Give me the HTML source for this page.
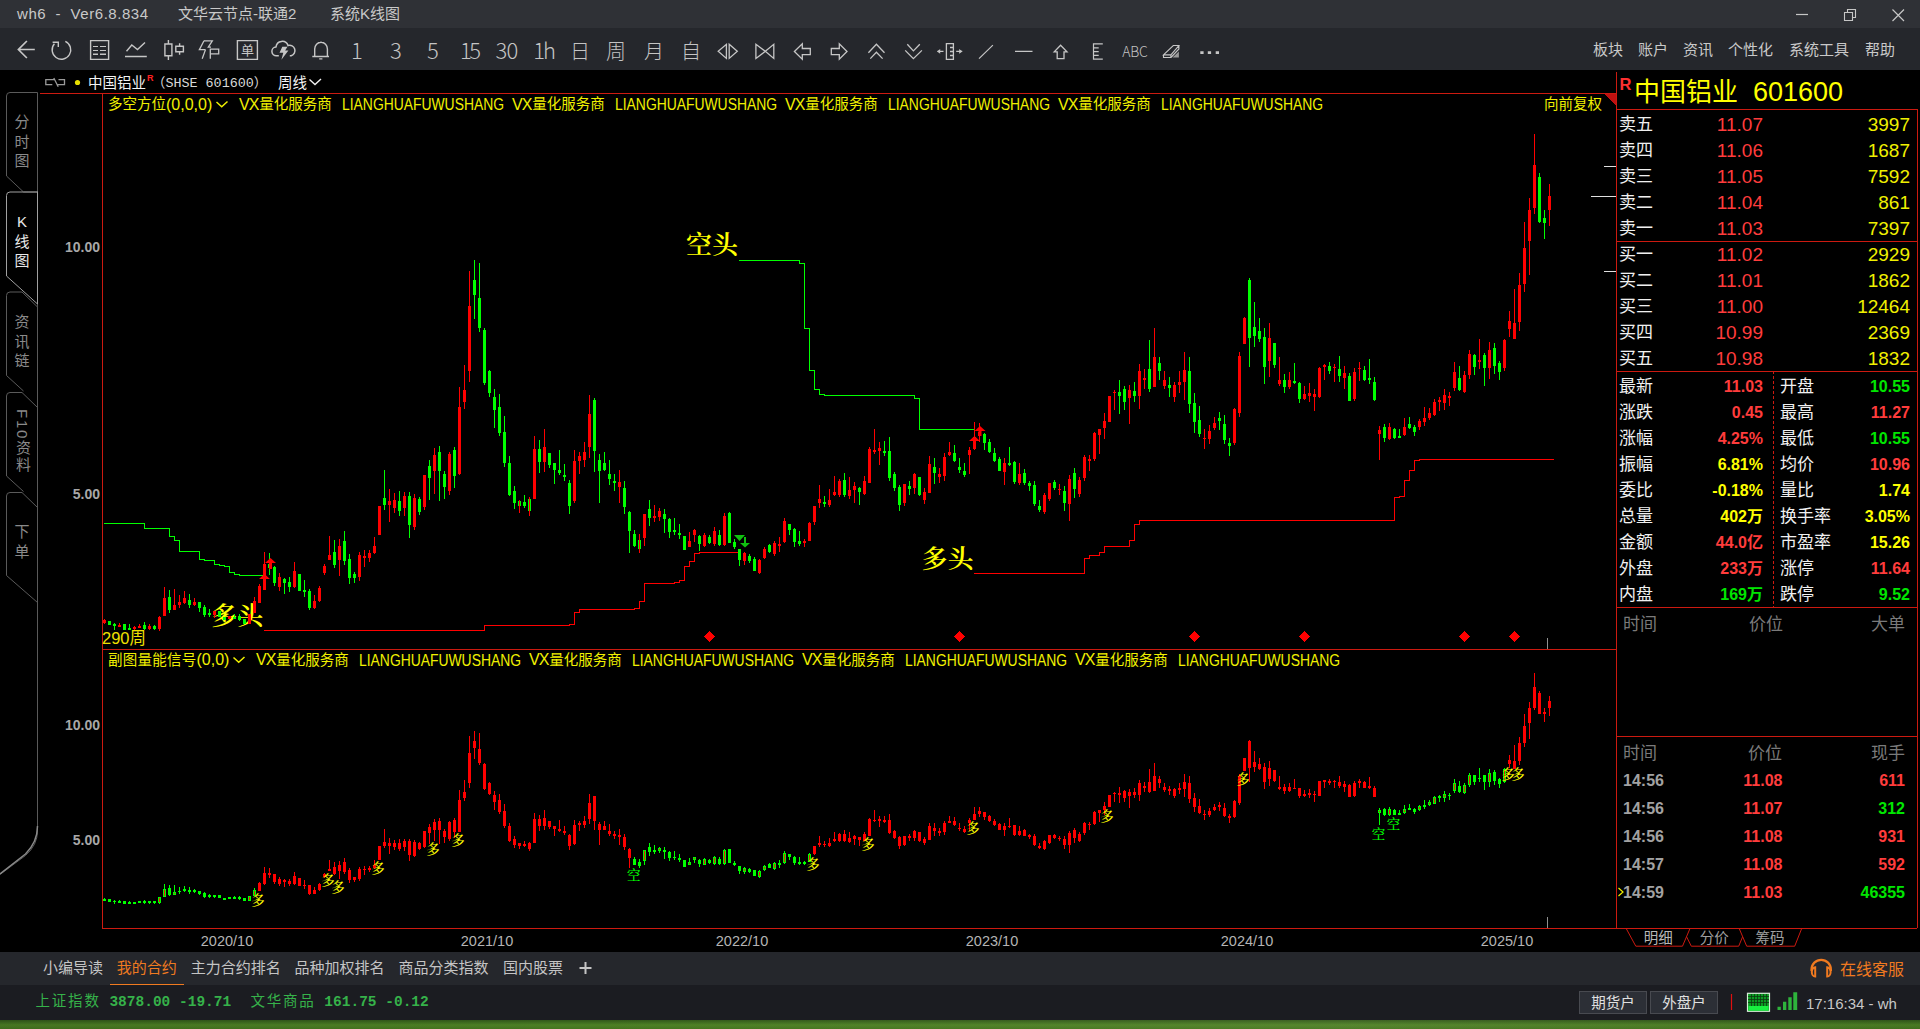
<!DOCTYPE html>
<html lang="zh-CN"><head><meta charset="utf-8"><title>wh6 - 系统K线图</title>
<style>
*{margin:0;padding:0;box-sizing:border-box}
html,body{width:1920px;height:1029px;overflow:hidden;background:#000}
body{position:relative;font-family:"Liberation Sans","Noto Sans CJK SC",sans-serif;color:#ccc}
.abs,.t{position:absolute;white-space:nowrap}
.t{line-height:1;transform:translateY(-50%)}
.r{text-align:right;transform:translate(-100%,-50%)}
.c{text-align:center;transform:translate(-50%,-50%)}
#titlebar{left:0;top:0;width:1920px;height:28px;background:#2f3136}
#toolbar{left:0;top:28px;width:1920px;height:42px;background:#25272c}
#tabbar{left:0;top:952px;width:1920px;height:33px;background:#25272c}
#status{left:0;top:985px;width:1920px;height:35px;background:#1b1c21}
#grass{left:0;top:1020px;width:1920px;height:9px;background:linear-gradient(90deg,rgba(0,0,0,0.08),rgba(0,0,0,0) 30%,rgba(255,255,200,0.06) 70%,rgba(0,0,0,0.05)),linear-gradient(#31581a,#4c8024 55%,#44741f)}
.tt{font-size:15px;color:#c9c9c9}
.menu{font-size:15px;color:#c9c9c9}
.y{color:#ffff00}
.red{color:#ff3c3c}
.grn{color:#00e600}
.lab{font-size:17px;color:#f0f0f0}
.num{font-size:19px}
.b{font-weight:bold;font-size:16px}
.hd{font-size:17px;color:#7a7a7a}
.ax{font-size:14px;font-weight:bold;color:#a8a8a8}
.date{font-size:14.5px;color:#b4b4b4}
.ind{font-size:14.5px;color:#f0f000}
.kai{font-family:"Noto Serif CJK SC",serif;font-weight:700;font-style:italic}
.side{font-size:15px;color:#8a8a8a;line-height:19.5px;width:20px;text-align:center;white-space:normal}
.lat{display:inline-block;font-size:16px;line-height:14.5px;transform:translateY(1px) scaleX(0.868);transform-origin:0 50%}
.lt2{font-size:16px;line-height:14.5px;position:relative;top:0.5px}
.tb{font-size:22px;color:#c4c4c4;font-family:"Noto Sans CJK SC",sans-serif;font-weight:300}
.tbc{font-size:20px;color:#c4c4c4;font-weight:300}
</style></head>
<body>
<div class="abs" id="titlebar"></div>
<div class="abs" id="toolbar"></div>
<div class="abs" id="tabbar"></div>
<div class="abs" id="status"></div>
<div class="abs" id="grass"></div>
<div class="abs" style="left:110px;top:984px;width:74px;height:1px;background:#f07a20"></div>
<div class="abs" style="left:1579px;top:991px;width:68px;height:23px;background:#2c2f36;border:1px solid #484a50"></div>
<div class="abs" style="left:1650px;top:991px;width:68px;height:23px;background:#2c2f36;border:1px solid #484a50"></div>
<svg id="chart" width="1920" height="1029" viewBox="0 0 1920 1029" style="position:absolute;left:0;top:0" shape-rendering="crispEdges">
<path d="M40 93.5H1616.5M102.5 93V928M102 649.5H1616.5M102 928.5H1917" stroke="#cc1a10" stroke-width="1" fill="none"/>
<path d="M1616.5 72V928" stroke="#cc1a10" stroke-width="1" fill="none"/>
<path d="M1604 94H1616V106z" fill="#c01010"/>
<path d="M104 523.5H144V528.5H169V536.5H174V540.5H179V551.5H199V559.5H204V560.5H214V564.5H219V565.5H224V566.5H229V572.5H234V574.5H239V575.5H264" fill="none" stroke="#00ff00" stroke-width="1"/>
<path d="M264 630.5H484V625.5H569V624.5H574V612.5H579V609.5H634V608.5H639V601.5H644V583.5H674V582.5H679V580.5H684V566.5H689V561.5H694V553.5H699V552.5H739" fill="none" stroke="#ff0000" stroke-width="1"/>
<path d="M739 260.5H799V263.5H804V328.5H809V370.5H814V389.5H819V394.5H824V395.5H914V398.5H919V429.5H974" fill="none" stroke="#00ff00" stroke-width="1"/>
<path d="M974 573.5H1084V558.5H1089V555.5H1099V552.5H1104V546.5H1129V540.5H1134V524.5H1139V520.5H1394V497.5H1399V496.5H1404V480.5H1409V470.5H1414V460.5H1419V459.5H1554" fill="none" stroke="#ff0000" stroke-width="1"/>
<g font-family="Noto Serif CJK SC, serif" font-weight="600" font-size="26" fill="#ffff00" text-anchor="middle" shape-rendering="auto" text-rendering="geometricPrecision"><text x="712" y="254">空头</text><text x="237.300" y="624.500">多头</text><text x="947.500" y="568">多头</text></g>
<path fill="#ff0000" d="M103 620h3v3h-3zM104 619h1v5h-1zM118 625h3v2h-3zM119 623h1v4h-1zM133 627h3v2h-3zM134 626h1v4h-1zM138 626h3v2h-3zM139 624h1v4h-1zM148 626h3v3h-3zM149 624h1v6h-1zM158 617h3v12h-3zM159 616h1v15h-1zM163 598h3v18h-3zM164 587h1v29h-1zM173 605h3v5h-3zM174 589h1v21h-1zM178 602h3v3h-3zM179 595h1v13h-1zM183 598h3v5h-3zM184 591h1v13h-1zM193 602h3v3h-3zM194 598h1v8h-1zM213 611h3v4h-3zM214 611h1v7h-1zM228 616h3v3h-3zM229 616h1v3h-1zM248 614h3v10h-3zM249 614h1v10h-1zM253 601h3v12h-3zM254 597h1v16h-1zM258 586h3v17h-3zM259 584h1v19h-1zM263 564h3v24h-3zM264 552h1v37h-1zM278 577h3v10h-3zM279 573h1v18h-1zM293 571h3v16h-3zM294 562h1v26h-1zM313 601h3v7h-3zM314 595h1v14h-1zM318 588h3v13h-3zM319 586h1v16h-1zM323 566h3v7h-3zM324 564h1v11h-1zM328 555h3v5h-3zM329 536h1v24h-1zM338 546h3v14h-3zM339 539h1v37h-1zM358 555h3v22h-3zM359 552h1v29h-1zM363 556h3v2h-3zM364 550h1v17h-1zM368 553h3v5h-3zM369 550h1v12h-1zM373 546h3v7h-3zM374 537h1v17h-1zM378 506h3v29h-3zM379 506h1v29h-1zM388 501h3v4h-3zM389 489h1v33h-1zM393 500h3v8h-3zM394 493h1v20h-1zM403 496h3v12h-3zM404 492h1v24h-1zM413 498h3v29h-3zM414 494h1v36h-1zM423 475h3v32h-3zM424 475h1v35h-1zM433 455h3v16h-3zM434 448h1v46h-1zM448 454h3v37h-3zM449 452h1v43h-1zM458 407h3v67h-3zM459 387h1v88h-1zM463 390h3v12h-3zM464 365h1v44h-1zM468 306h3v65h-3zM469 271h1v111h-1zM533 449h3v50h-3zM534 436h1v63h-1zM543 447h3v15h-3zM544 429h1v43h-1zM573 461h3v40h-3zM574 450h1v53h-1zM578 456h3v5h-3zM579 452h1v22h-1zM583 452h3v8h-3zM584 442h1v25h-1zM588 414h3v33h-3zM589 395h1v63h-1zM618 482h3v5h-3zM619 470h1v33h-1zM643 514h3v24h-3zM644 514h1v32h-1zM653 516h3v2h-3zM654 505h1v17h-1zM658 511h3v6h-3zM659 508h1v13h-1zM688 541h3v6h-3zM689 532h1v15h-1zM693 530h3v5h-3zM694 529h1v13h-1zM703 535h3v11h-3zM704 533h1v14h-1zM713 531h3v13h-3zM714 527h1v19h-1zM723 516h3v29h-3zM724 513h1v33h-1zM743 553h3v8h-3zM744 552h1v13h-1zM758 560h3v13h-3zM759 559h1v15h-1zM763 549h3v9h-3zM764 547h1v12h-1zM773 543h3v11h-3zM774 541h1v15h-1zM778 544h3v2h-3zM779 537h1v15h-1zM783 521h3v21h-3zM784 518h1v25h-1zM803 541h3v2h-3zM804 539h1v8h-1zM808 523h3v18h-3zM809 522h1v19h-1zM813 506h3v16h-3zM814 506h1v19h-1zM818 499h3v4h-3zM819 485h1v23h-1zM828 500h3v5h-3zM829 489h1v18h-1zM833 492h3v3h-3zM834 476h1v20h-1zM838 481h3v14h-3zM839 479h1v18h-1zM848 490h3v6h-3zM849 477h1v22h-1zM853 486h3v4h-3zM854 482h1v21h-1zM863 481h3v13h-3zM864 476h1v19h-1zM868 449h3v34h-3zM869 447h1v36h-1zM873 450h3v2h-3zM874 429h1v25h-1zM878 448h3v3h-3zM879 442h1v23h-1zM903 484h3v19h-3zM904 484h1v22h-1zM913 474h3v14h-3zM914 473h1v21h-1zM923 492h3v8h-3zM924 488h1v16h-1zM928 464h3v29h-3zM929 456h1v37h-1zM938 474h3v3h-3zM939 468h1v15h-1zM943 457h3v19h-3zM944 453h1v28h-1zM948 452h3v3h-3zM949 442h1v14h-1zM968 450h3v5h-3zM969 447h1v27h-1zM973 437h3v12h-3zM974 422h1v28h-1zM978 432h3v4h-3zM979 423h1v19h-1zM1003 463h3v9h-3zM1004 458h1v27h-1zM1018 474h3v9h-3zM1019 463h1v22h-1zM1043 495h3v17h-3zM1044 493h1v21h-1zM1048 483h3v16h-3zM1049 483h1v18h-1zM1058 489h3v1h-3zM1059 484h1v11h-1zM1068 479h3v25h-3zM1069 475h1v46h-1zM1078 480h3v14h-3zM1079 477h1v20h-1zM1083 457h3v21h-3zM1084 455h1v26h-1zM1088 459h3v2h-3zM1089 455h1v16h-1zM1093 433h3v26h-3zM1094 432h1v29h-1zM1098 429h3v6h-3zM1099 429h1v25h-1zM1103 421h3v7h-3zM1104 413h1v26h-1zM1108 396h3v26h-3zM1109 396h1v26h-1zM1113 392h3v1h-3zM1114 390h1v20h-1zM1128 390h3v8h-3zM1129 385h1v39h-1zM1138 371h3v25h-3zM1139 364h1v45h-1zM1143 378h3v2h-3zM1144 369h1v20h-1zM1153 357h3v30h-3zM1154 328h1v59h-1zM1163 380h3v6h-3zM1164 371h1v18h-1zM1173 385h3v12h-3zM1174 382h1v20h-1zM1178 382h3v3h-3zM1179 371h1v22h-1zM1183 370h3v12h-3zM1184 352h1v48h-1zM1203 438h3v1h-3zM1204 429h1v20h-1zM1208 431h3v8h-3zM1209 425h1v19h-1zM1213 423h3v5h-3zM1214 417h1v13h-1zM1233 409h3v34h-3zM1234 408h1v37h-1zM1238 356h3v57h-3zM1239 352h1v65h-1zM1243 318h3v26h-3zM1244 317h1v27h-1zM1268 338h3v23h-3zM1269 323h1v54h-1zM1278 380h3v4h-3zM1279 357h1v29h-1zM1288 380h3v7h-3zM1289 372h1v17h-1zM1303 394h3v5h-3zM1304 386h1v14h-1zM1308 393h3v3h-3zM1309 383h1v19h-1zM1313 394h3v3h-3zM1314 389h1v22h-1zM1318 368h3v29h-3zM1319 367h1v31h-1zM1323 365h3v2h-3zM1324 364h1v16h-1zM1333 367h3v1h-3zM1334 364h1v18h-1zM1343 373h3v5h-3zM1344 366h1v23h-1zM1353 372h3v27h-3zM1354 368h1v33h-1zM1358 368h3v1h-3zM1359 362h1v19h-1zM1378 430h3v4h-3zM1379 426h1v34h-1zM1388 427h3v12h-3zM1389 423h1v17h-1zM1403 427h3v8h-3zM1404 418h1v18h-1zM1418 421h3v6h-3zM1419 419h1v11h-1zM1423 418h3v4h-3zM1424 407h1v19h-1zM1428 413h3v5h-3zM1429 408h1v12h-1zM1433 402h3v13h-3zM1434 399h1v17h-1zM1438 400h3v2h-3zM1439 397h1v14h-1zM1443 395h3v8h-3zM1444 389h1v21h-1zM1448 396h3v2h-3zM1449 392h1v14h-1zM1453 372h3v16h-3zM1454 362h1v29h-1zM1463 375h3v17h-3zM1464 371h1v22h-1zM1468 354h3v21h-3zM1469 350h1v29h-1zM1478 360h3v2h-3zM1479 339h1v30h-1zM1488 350h3v18h-3zM1489 342h1v37h-1zM1503 340h3v28h-3zM1504 339h1v32h-1zM1508 321h3v8h-3zM1509 311h1v26h-1zM1513 323h3v16h-3zM1514 289h1v50h-1zM1518 285h3v37h-3zM1519 273h1v58h-1zM1523 248h3v36h-3zM1524 222h1v70h-1zM1528 210h3v31h-3zM1529 198h1v77h-1zM1533 165h3v43h-3zM1534 134h1v80h-1zM1548 196h3v14h-3zM1549 184h1v42h-1z"/>
<path fill="#00ff00" d="M108 621h3v4h-3zM109 621h1v4h-1zM113 624h3v2h-3zM114 623h1v7h-1zM123 624h3v6h-3zM124 624h1v6h-1zM128 628h3v2h-3zM129 624h1v6h-1zM143 625h3v4h-3zM144 622h1v8h-1zM153 626h3v3h-3zM154 625h1v5h-1zM168 597h3v13h-3zM169 590h1v23h-1zM188 600h3v5h-3zM189 594h1v14h-1zM198 602h3v6h-3zM199 602h1v10h-1zM203 607h3v8h-3zM204 605h1v12h-1zM208 613h3v2h-3zM209 609h1v8h-1zM218 611h3v6h-3zM219 611h1v6h-1zM223 617h3v3h-3zM224 617h1v3h-1zM233 617h3v2h-3zM234 614h1v5h-1zM238 616h3v4h-3zM239 614h1v7h-1zM243 619h3v5h-3zM244 619h1v5h-1zM268 564h3v4h-3zM269 553h1v22h-1zM273 567h3v16h-3zM274 566h1v20h-1zM283 579h3v4h-3zM284 578h1v16h-1zM288 582h3v5h-3zM289 577h1v15h-1zM298 574h3v17h-3zM299 574h1v17h-1zM303 590h3v2h-3zM304 580h1v17h-1zM308 591h3v17h-3zM309 589h1v21h-1zM333 552h3v13h-3zM334 540h1v28h-1zM343 541h3v20h-3zM344 531h1v34h-1zM348 559h3v19h-3zM349 554h1v30h-1zM353 574h3v4h-3zM354 572h1v11h-1zM383 498h3v7h-3zM384 470h1v40h-1zM398 501h3v10h-3zM399 491h1v25h-1zM408 496h3v29h-3zM409 492h1v46h-1zM418 499h3v13h-3zM419 497h1v18h-1zM428 466h3v12h-3zM429 460h1v40h-1zM438 452h3v19h-3zM439 446h1v55h-1zM443 474h3v13h-3zM444 471h1v28h-1zM453 450h3v26h-3zM454 447h1v41h-1zM473 280h3v15h-3zM474 260h1v59h-1zM478 298h3v30h-3zM479 263h1v69h-1zM483 330h3v53h-3zM484 328h1v57h-1zM488 371h3v22h-3zM489 370h1v27h-1zM493 397h3v13h-3zM494 389h1v39h-1zM498 407h3v26h-3zM499 394h1v42h-1zM503 432h3v31h-3zM504 416h1v51h-1zM508 463h3v32h-3zM509 456h1v40h-1zM513 491h3v12h-3zM514 486h1v23h-1zM518 501h3v5h-3zM523 502h3v4h-3zM524 495h1v13h-1zM528 499h3v12h-3zM538 449h3v13h-3zM539 440h1v33h-1zM548 453h3v12h-3zM549 453h1v15h-1zM553 463h3v7h-3zM554 463h1v21h-1zM558 470h3v3h-3zM559 450h1v25h-1zM563 475h3v2h-3zM564 464h1v17h-1zM568 483h3v23h-3zM569 480h1v34h-1zM593 400h3v51h-3zM594 398h1v74h-1zM598 460h3v11h-3zM599 454h1v49h-1zM603 463h3v7h-3zM604 452h1v19h-1zM608 474h3v5h-3zM609 460h1v25h-1zM613 481h3v2h-3zM614 474h1v17h-1zM623 488h3v19h-3zM624 481h1v33h-1zM628 512h3v19h-3zM629 511h1v42h-1zM633 534h3v12h-3zM634 530h1v17h-1zM638 540h3v9h-3zM648 509h3v9h-3zM649 500h1v26h-1zM663 514h3v5h-3zM664 509h1v24h-1zM668 519h3v13h-3zM669 518h1v20h-1zM673 530h3v2h-3zM674 518h1v17h-1zM678 533h3v2h-3zM679 524h1v15h-1zM683 536h3v14h-3zM684 536h1v14h-1zM698 536h3v8h-3zM699 535h1v16h-1zM708 537h3v6h-3zM709 535h1v9h-1zM718 535h3v10h-3zM719 530h1v16h-1zM728 513h3v30h-3zM729 512h1v31h-1zM733 542h3v5h-3zM734 539h1v10h-1zM738 549h3v11h-3zM739 549h1v17h-1zM748 556h3v5h-3zM749 554h1v9h-1zM753 559h3v12h-3zM754 557h1v14h-1zM768 545h3v7h-3zM769 544h1v9h-1zM788 524h3v6h-3zM789 524h1v11h-1zM793 529h3v13h-3zM794 528h1v19h-1zM798 541h3v3h-3zM799 531h1v15h-1zM823 502h3v2h-3zM824 496h1v11h-1zM843 480h3v15h-3zM844 473h1v24h-1zM858 488h3v4h-3zM859 487h1v18h-1zM883 451h3v2h-3zM884 441h1v15h-1zM888 451h3v27h-3zM889 437h1v44h-1zM893 474h3v14h-3zM894 472h1v19h-1zM898 487h3v18h-3zM899 485h1v26h-1zM908 486h3v3h-3zM909 481h1v14h-1zM918 477h3v18h-3zM919 477h1v19h-1zM933 467h3v6h-3zM934 458h1v26h-1zM953 453h3v8h-3zM954 445h1v17h-1zM958 467h3v3h-3zM959 458h1v15h-1zM963 471h3v4h-3zM964 463h1v14h-1zM983 434h3v9h-3zM984 433h1v17h-1zM988 442h3v10h-3zM989 439h1v14h-1zM993 453h3v8h-3zM994 448h1v14h-1zM998 459h3v12h-3zM999 457h1v14h-1zM1008 463h3v2h-3zM1009 447h1v19h-1zM1013 462h3v20h-3zM1014 461h1v23h-1zM1023 473h3v10h-3zM1024 469h1v16h-1zM1028 483h3v3h-3zM1029 481h1v10h-1zM1033 485h3v19h-3zM1034 481h1v25h-1zM1038 506h3v4h-3zM1039 500h1v12h-1zM1053 482h3v6h-3zM1054 480h1v10h-1zM1063 491h3v12h-3zM1064 486h1v25h-1zM1073 473h3v16h-3zM1074 468h1v30h-1zM1118 392h3v4h-3zM1119 380h1v34h-1zM1123 389h3v13h-3zM1124 386h1v24h-1zM1133 391h3v5h-3zM1134 382h1v20h-1zM1148 369h3v20h-3zM1149 340h1v52h-1zM1158 363h3v8h-3zM1159 357h1v23h-1zM1168 385h3v3h-3zM1169 377h1v20h-1zM1188 371h3v33h-3zM1189 357h1v56h-1zM1193 403h3v19h-3zM1194 393h1v40h-1zM1198 420h3v14h-3zM1199 406h1v31h-1zM1218 418h3v3h-3zM1219 412h1v18h-1zM1223 424h3v16h-3zM1224 415h1v29h-1zM1228 443h3v3h-3zM1229 438h1v18h-1zM1248 280h3v58h-3zM1249 278h1v89h-1zM1253 327h3v9h-3zM1254 302h1v45h-1zM1258 331h3v8h-3zM1259 318h1v24h-1zM1263 337h3v30h-3zM1264 328h1v56h-1zM1273 343h3v22h-3zM1274 343h1v25h-1zM1283 380h3v7h-3zM1284 374h1v19h-1zM1293 381h3v2h-3zM1294 363h1v21h-1zM1298 383h3v16h-3zM1299 382h1v21h-1zM1328 366h3v5h-3zM1329 362h1v12h-1zM1338 369h3v7h-3zM1339 356h1v26h-1zM1348 376h3v25h-3zM1349 373h1v28h-1zM1363 370h3v10h-3zM1364 366h1v15h-1zM1368 378h3v2h-3zM1369 359h1v25h-1zM1373 382h3v18h-3zM1374 377h1v24h-1zM1383 427h3v11h-3zM1384 424h1v18h-1zM1393 429h3v9h-3zM1394 428h1v11h-1zM1398 436h3v2h-3zM1399 429h1v9h-1zM1408 424h3v4h-3zM1409 417h1v12h-1zM1413 427h3v5h-3zM1414 425h1v11h-1zM1458 378h3v12h-3zM1459 366h1v25h-1zM1473 355h3v12h-3zM1474 354h1v21h-1zM1483 355h3v13h-3zM1484 353h1v33h-1zM1493 348h3v18h-3zM1494 343h1v31h-1zM1498 363h3v9h-3zM1499 361h1v19h-1zM1538 177h3v45h-3zM1539 173h1v50h-1zM1543 218h3v5h-3zM1544 210h1v29h-1z"/>
<path fill="#ff0000" d="M519 500h1v13h-1zM529 497h1v19h-1zM639 534h1v19h-1z"/>
<path fill="#ff0000" d="M258 883h3v8h-3zM259 882h1v9h-1zM263 873h3v11h-3zM264 867h1v18h-1zM268 873h3v2h-3zM269 868h1v10h-1zM273 874h3v8h-3zM274 874h1v10h-1zM278 879h3v5h-3zM279 877h1v9h-1zM283 880h3v2h-3zM284 879h1v8h-1zM288 881h3v3h-3zM289 879h1v7h-1zM293 876h3v8h-3zM294 872h1v13h-1zM298 878h3v8h-3zM299 878h1v8h-1zM303 885h3v1h-3zM304 880h1v9h-1zM308 885h3v9h-3zM309 885h1v10h-1zM313 890h3v4h-3zM314 887h1v7h-1zM318 884h3v6h-3zM319 883h1v8h-1zM323 874h3v3h-3zM324 873h1v5h-1zM328 869h3v2h-3zM329 860h1v11h-1zM333 867h3v7h-3zM334 862h1v13h-1zM338 865h3v6h-3zM339 861h1v18h-1zM343 862h3v10h-3zM344 858h1v16h-1zM348 870h3v10h-3zM349 868h1v15h-1zM353 877h3v3h-3zM354 877h1v5h-1zM358 869h3v10h-3zM359 867h1v14h-1zM363 869h3v1h-3zM364 866h1v9h-1zM368 868h3v2h-3zM369 866h1v6h-1zM373 865h3v3h-3zM374 860h1v9h-1zM378 846h3v14h-3zM379 846h1v14h-1zM383 842h3v4h-3zM384 829h1v19h-1zM388 843h3v3h-3zM389 838h1v16h-1zM393 843h3v4h-3zM394 840h1v10h-1zM398 843h3v6h-3zM399 839h1v12h-1zM403 841h3v6h-3zM404 839h1v12h-1zM408 841h3v14h-3zM409 839h1v22h-1zM413 842h3v14h-3zM414 840h1v17h-1zM418 843h3v6h-3zM419 842h1v8h-1zM423 831h3v16h-3zM424 831h1v17h-1zM428 827h3v6h-3zM429 824h1v20h-1zM433 822h3v8h-3zM434 819h1v22h-1zM438 821h3v9h-3zM439 818h1v26h-1zM443 831h3v6h-3zM444 829h1v14h-1zM448 822h3v17h-3zM449 821h1v20h-1zM453 820h3v12h-3zM454 818h1v20h-1zM458 800h3v32h-3zM459 790h1v42h-1zM463 792h3v6h-3zM464 780h1v21h-1zM468 753h3v30h-3zM469 736h1v52h-1zM473 741h3v7h-3zM474 731h1v28h-1zM478 749h3v14h-3zM479 733h1v32h-1zM483 764h3v25h-3zM484 763h1v27h-1zM488 783h3v11h-3zM489 782h1v13h-1zM493 795h3v7h-3zM494 791h1v19h-1zM498 800h3v12h-3zM499 794h1v20h-1zM503 811h3v15h-3zM504 804h1v24h-1zM508 826h3v15h-3zM509 823h1v19h-1zM513 839h3v6h-3zM514 836h1v12h-1zM518 843h3v3h-3zM519 843h1v6h-1zM523 844h3v2h-3zM524 841h1v6h-1zM528 843h3v6h-3zM529 842h1v9h-1zM533 819h3v24h-3zM534 813h1v30h-1zM538 819h3v7h-3zM539 815h1v16h-1zM543 818h3v8h-3zM544 810h1v20h-1zM548 821h3v6h-3zM549 821h1v8h-1zM553 826h3v3h-3zM554 826h1v10h-1zM558 829h3v2h-3zM559 820h1v12h-1zM563 831h3v2h-3zM564 826h1v9h-1zM568 835h3v11h-3zM569 834h1v16h-1zM573 825h3v19h-3zM574 820h1v25h-1zM578 823h3v2h-3zM579 821h1v10h-1zM583 821h3v4h-3zM584 816h1v12h-1zM588 803h3v16h-3zM589 794h1v30h-1zM593 796h3v25h-3zM594 796h1v34h-1zM598 824h3v6h-3zM599 822h1v23h-1zM603 826h3v4h-3zM604 821h1v9h-1zM608 831h3v3h-3zM609 824h1v12h-1zM613 834h3v2h-3zM614 831h1v8h-1zM618 835h3v2h-3zM619 829h1v16h-1zM623 837h3v10h-3zM624 834h1v16h-1zM628 849h3v9h-3zM629 848h1v20h-1zM813 846h3v8h-3zM814 846h1v9h-1zM818 843h3v2h-3zM819 836h1v11h-1zM823 844h3v1h-3zM824 841h1v6h-1zM828 843h3v3h-3zM829 838h1v9h-1zM833 839h3v2h-3zM834 832h1v10h-1zM838 834h3v7h-3zM839 833h1v9h-1zM843 834h3v7h-3zM844 830h1v12h-1zM848 838h3v4h-3zM849 832h1v11h-1zM853 836h3v3h-3zM854 835h1v10h-1zM858 837h3v3h-3zM859 837h1v9h-1zM863 834h3v7h-3zM864 832h1v9h-1zM868 819h3v17h-3zM869 818h1v18h-1zM873 820h3v1h-3zM874 810h1v12h-1zM878 819h3v2h-3zM879 816h1v11h-1zM883 820h3v2h-3zM884 816h1v7h-1zM888 820h3v13h-3zM889 814h1v20h-1zM893 831h3v7h-3zM894 830h1v9h-1zM898 837h3v9h-3zM899 836h1v13h-1zM903 836h3v9h-3zM904 836h1v10h-1zM908 836h3v2h-3zM909 834h1v7h-1zM913 831h3v7h-3zM914 830h1v11h-1zM918 832h3v9h-3zM919 832h1v10h-1zM923 839h3v4h-3zM924 837h1v8h-1zM928 826h3v14h-3zM929 823h1v17h-1zM933 828h3v3h-3zM934 823h1v13h-1zM938 831h3v2h-3zM939 828h1v8h-1zM943 823h3v9h-3zM944 821h1v14h-1zM948 821h3v2h-3zM949 816h1v7h-1zM953 821h3v4h-3zM954 817h1v9h-1zM958 828h3v1h-3zM959 823h1v8h-1zM963 829h3v3h-3zM964 826h1v7h-1zM968 820h3v3h-3zM969 818h1v13h-1zM973 814h3v6h-3zM974 807h1v13h-1zM978 811h3v3h-3zM979 807h1v10h-1zM983 812h3v5h-3zM984 812h1v8h-1zM988 816h3v5h-3zM989 815h1v7h-1zM993 821h3v4h-3zM994 819h1v7h-1zM998 824h3v6h-3zM999 823h1v7h-1zM1003 826h3v4h-3zM1004 823h1v13h-1zM1008 826h3v1h-3zM1009 818h1v10h-1zM1013 825h3v10h-3zM1014 825h1v11h-1zM1018 831h3v4h-3zM1019 826h1v10h-1zM1023 830h3v6h-3zM1024 829h1v7h-1zM1028 835h3v2h-3zM1029 834h1v5h-1zM1033 836h3v9h-3zM1034 834h1v12h-1zM1038 846h3v2h-3zM1039 843h1v6h-1zM1043 841h3v8h-3zM1044 840h1v10h-1zM1048 835h3v8h-3zM1049 835h1v9h-1zM1053 835h3v3h-3zM1054 834h1v5h-1zM1058 838h3v1h-3zM1059 836h1v5h-1zM1063 839h3v6h-3zM1064 836h1v13h-1zM1068 833h3v12h-3zM1069 831h1v22h-1zM1073 830h3v8h-3zM1074 828h1v15h-1zM1078 834h3v7h-3zM1079 832h1v10h-1zM1083 823h3v10h-3zM1084 822h1v13h-1zM1088 824h3v1h-3zM1089 822h1v8h-1zM1093 812h3v12h-3zM1094 811h1v14h-1zM1098 810h3v3h-3zM1099 810h1v12h-1zM1103 806h3v4h-3zM1104 802h1v13h-1zM1108 795h3v12h-3zM1109 795h1v12h-1zM1113 793h3v1h-3zM1114 792h1v10h-1zM1118 793h3v2h-3zM1119 787h1v16h-1zM1123 791h3v7h-3zM1124 790h1v12h-1zM1128 792h3v4h-3zM1129 789h1v19h-1zM1133 792h3v3h-3zM1134 788h1v10h-1zM1138 783h3v12h-3zM1139 780h1v21h-1zM1143 786h3v2h-3zM1144 782h1v10h-1zM1148 782h3v10h-3zM1149 769h1v24h-1zM1153 776h3v15h-3zM1154 763h1v28h-1zM1158 779h3v4h-3zM1159 776h1v12h-1zM1163 787h3v3h-3zM1164 783h1v9h-1zM1168 789h3v2h-3zM1169 786h1v9h-1zM1173 789h3v7h-3zM1174 788h1v10h-1zM1178 788h3v2h-3zM1179 783h1v11h-1zM1183 782h3v7h-3zM1184 774h1v23h-1zM1188 783h3v16h-3zM1189 776h1v27h-1zM1193 798h3v9h-3zM1194 793h1v19h-1zM1198 806h3v7h-3zM1199 799h1v15h-1zM1203 814h3v1h-3zM1204 810h1v10h-1zM1208 811h3v4h-3zM1209 808h1v9h-1zM1213 807h3v3h-3zM1214 804h1v7h-1zM1218 805h3v2h-3zM1219 802h1v9h-1zM1223 808h3v8h-3zM1224 803h1v14h-1zM1228 816h3v2h-3zM1229 814h1v9h-1zM1233 801h3v16h-3zM1234 800h1v18h-1zM1238 776h3v27h-3zM1239 774h1v31h-1zM1243 758h3v13h-3zM1244 758h1v13h-1zM1248 741h3v27h-3zM1249 740h1v42h-1zM1253 762h3v5h-3zM1254 751h1v21h-1zM1258 764h3v5h-3zM1259 758h1v12h-1zM1263 767h3v15h-3zM1264 763h1v26h-1zM1268 768h3v11h-3zM1269 761h1v25h-1zM1273 770h3v11h-3zM1274 770h1v12h-1zM1278 787h3v2h-3zM1279 776h1v14h-1zM1283 787h3v4h-3zM1284 784h1v10h-1zM1288 787h3v4h-3zM1289 783h1v9h-1zM1293 788h3v1h-3zM1294 779h1v10h-1zM1298 788h3v8h-3zM1299 788h1v10h-1zM1303 794h3v2h-3zM1304 790h1v7h-1zM1308 793h3v2h-3zM1309 789h1v9h-1zM1313 794h3v1h-3zM1314 791h1v11h-1zM1318 781h3v15h-3zM1319 781h1v15h-1zM1323 780h3v2h-3zM1324 780h1v8h-1zM1328 781h3v2h-3zM1329 779h1v6h-1zM1333 781h3v1h-3zM1334 780h1v8h-1zM1338 782h3v4h-3zM1339 776h1v12h-1zM1343 784h3v3h-3zM1344 781h1v11h-1zM1348 785h3v12h-3zM1349 784h1v13h-1zM1353 783h3v13h-3zM1354 781h1v16h-1zM1358 781h3v2h-3zM1359 779h1v9h-1zM1363 782h3v6h-3zM1364 781h1v7h-1zM1368 786h3v2h-3zM1369 777h1v12h-1zM1373 788h3v9h-3zM1374 786h1v11h-1zM1508 760h3v4h-3zM1509 755h1v13h-1zM1513 761h3v8h-3zM1514 745h1v24h-1zM1518 743h3v18h-3zM1519 737h1v28h-1zM1523 726h3v17h-3zM1524 714h1v33h-1zM1528 708h3v15h-3zM1529 702h1v37h-1zM1533 687h3v21h-3zM1534 673h1v37h-1zM1538 693h3v21h-3zM1539 691h1v23h-1zM1543 712h3v2h-3zM1544 708h1v14h-1zM1548 701h3v7h-3zM1549 696h1v20h-1z"/>
<path fill="#00ff00" d="M103 899h3v2h-3zM104 898h1v3h-1zM108 899h3v3h-3zM109 899h1v3h-1zM113 901h3v1h-3zM114 900h1v4h-1zM118 901h3v2h-3zM119 900h1v3h-1zM123 901h3v3h-3zM124 901h1v3h-1zM128 902h3v2h-3zM129 901h1v3h-1zM133 902h3v2h-3zM134 902h1v2h-1zM138 901h3v2h-3zM139 901h1v2h-1zM143 901h3v2h-3zM144 900h1v4h-1zM148 901h3v2h-3zM149 901h1v3h-1zM153 901h3v2h-3zM154 901h1v3h-1zM158 897h3v6h-3zM159 897h1v7h-1zM163 889h3v8h-3zM164 884h1v13h-1zM168 888h3v7h-3zM169 885h1v11h-1zM173 892h3v3h-3zM174 885h1v10h-1zM178 891h3v1h-3zM179 887h1v7h-1zM183 889h3v2h-3zM184 886h1v6h-1zM188 890h3v2h-3zM189 887h1v7h-1zM193 890h3v2h-3zM194 889h1v4h-1zM198 891h3v3h-3zM199 891h1v4h-1zM203 893h3v4h-3zM204 892h1v6h-1zM208 895h3v2h-3zM209 894h1v4h-1zM213 895h3v2h-3zM214 895h1v3h-1zM218 895h3v3h-3zM219 895h1v3h-1zM223 898h3v2h-3zM224 898h1v2h-1zM228 897h3v2h-3zM229 897h1v2h-1zM233 897h3v2h-3zM234 896h1v3h-1zM238 897h3v2h-3zM239 896h1v4h-1zM243 898h3v3h-3zM244 898h1v3h-1zM248 896h3v5h-3zM249 896h1v5h-1zM253 890h3v6h-3zM254 888h1v8h-1zM633 859h3v6h-3zM634 857h1v8h-1zM638 862h3v4h-3zM639 859h1v9h-1zM643 850h3v11h-3zM644 850h1v15h-1zM648 847h3v5h-3zM649 843h1v13h-1zM653 850h3v2h-3zM654 845h1v9h-1zM658 848h3v3h-3zM659 847h1v6h-1zM663 850h3v2h-3zM664 847h1v12h-1zM668 852h3v6h-3zM669 851h1v10h-1zM673 857h3v1h-3zM674 851h1v9h-1zM678 858h3v2h-3zM679 854h1v8h-1zM683 860h3v7h-3zM684 860h1v7h-1zM688 862h3v3h-3zM689 858h1v7h-1zM693 857h3v3h-3zM694 857h1v6h-1zM698 860h3v4h-3zM699 859h1v8h-1zM703 859h3v6h-3zM704 858h1v7h-1zM708 860h3v3h-3zM709 859h1v5h-1zM713 857h3v7h-3zM714 856h1v9h-1zM718 859h3v5h-3zM719 857h1v8h-1zM723 850h3v14h-3zM724 849h1v16h-1zM728 849h3v14h-3zM729 849h1v14h-1zM733 863h3v2h-3zM734 861h1v5h-1zM738 866h3v5h-3zM739 866h1v8h-1zM743 868h3v4h-3zM744 867h1v7h-1zM748 869h3v3h-3zM749 868h1v5h-1zM753 870h3v6h-3zM754 870h1v6h-1zM758 871h3v6h-3zM759 870h1v8h-1zM763 866h3v4h-3zM764 865h1v6h-1zM768 864h3v4h-3zM769 863h1v5h-1zM773 863h3v6h-3zM774 862h1v8h-1zM778 863h3v2h-3zM779 860h1v8h-1zM783 853h3v10h-3zM784 851h1v13h-1zM788 854h3v3h-3zM789 854h1v6h-1zM793 857h3v6h-3zM794 856h1v9h-1zM798 862h3v2h-3zM799 857h1v8h-1zM803 862h3v2h-3zM804 861h1v4h-1zM808 854h3v8h-3zM809 853h1v9h-1zM1378 810h3v3h-3zM1379 808h1v17h-1zM1383 809h3v6h-3zM1384 808h1v8h-1zM1388 809h3v6h-3zM1389 807h1v9h-1zM1393 810h3v5h-3zM1394 809h1v6h-1zM1398 813h3v2h-3zM1399 810h1v5h-1zM1403 809h3v4h-3zM1404 805h1v9h-1zM1408 808h3v2h-3zM1409 804h1v6h-1zM1413 809h3v3h-3zM1414 808h1v6h-1zM1418 806h3v4h-3zM1419 805h1v6h-1zM1423 805h3v2h-3zM1424 800h1v9h-1zM1428 802h3v3h-3zM1429 800h1v6h-1zM1433 797h3v7h-3zM1434 796h1v8h-1zM1438 796h3v2h-3zM1439 795h1v7h-1zM1443 794h3v4h-3zM1444 791h1v11h-1zM1448 795h3v1h-3zM1449 793h1v7h-1zM1453 783h3v8h-3zM1454 779h1v14h-1zM1458 786h3v6h-3zM1459 781h1v12h-1zM1463 785h3v8h-3zM1464 783h1v11h-1zM1468 775h3v10h-3zM1469 773h1v14h-1zM1473 775h3v7h-3zM1474 775h1v10h-1zM1478 778h3v1h-3zM1479 768h1v14h-1zM1483 775h3v7h-3zM1484 775h1v15h-1zM1488 773h3v9h-3zM1489 769h1v18h-1zM1493 772h3v9h-3zM1494 770h1v15h-1zM1498 779h3v5h-3zM1499 778h1v10h-1zM1503 769h3v13h-3zM1504 768h1v15h-1z"/>
<path fill="#e02000" d="M159 898h1v4h-1zM164 890h1v6h-1zM174 893h1v1h-1zM249 897h1v3h-1zM254 891h1v4h-1zM644 851h1v9h-1zM659 849h1v1h-1zM689 863h1v1h-1zM694 858h1v1h-1zM704 860h1v4h-1zM714 858h1v5h-1zM724 851h1v12h-1zM744 869h1v2h-1zM759 872h1v4h-1zM764 867h1v2h-1zM774 864h1v4h-1zM784 854h1v8h-1zM809 855h1v6h-1zM1379 811h1v1h-1zM1389 810h1v4h-1zM1404 810h1v2h-1zM1419 807h1v2h-1zM1429 803h1v1h-1zM1434 798h1v5h-1zM1444 795h1v2h-1zM1454 784h1v6h-1zM1464 786h1v6h-1zM1469 776h1v8h-1zM1489 774h1v7h-1zM1504 770h1v11h-1z"/>
<path d="M709.5 631l5.5 5.5l-5.5 5.5l-5.5 -5.5z" fill="#ff0000"/><path d="M959.5 631l5.5 5.5l-5.5 5.5l-5.5 -5.5z" fill="#ff0000"/><path d="M1194.5 631l5.5 5.5l-5.5 5.5l-5.5 -5.5z" fill="#ff0000"/><path d="M1304.5 631l5.5 5.5l-5.5 5.5l-5.5 -5.5z" fill="#ff0000"/><path d="M1464.5 631l5.5 5.5l-5.5 5.5l-5.5 -5.5z" fill="#ff0000"/><path d="M1514.5 631l5.5 5.5l-5.5 5.5l-5.5 -5.5z" fill="#ff0000"/>
<path d="M1604 166.5H1616M1591 196.5H1616M1604 271.5H1616" stroke="#e0e0e0" stroke-width="1"/>
<path d="M1547.5 638V649M1547.5 917V928" stroke="#909090" stroke-width="1"/>
<g fill="#ff0000" shape-rendering="auto"><path d="M264.5 574l5.5 5h-4.0V590h-3.0V579h-4.0z"/><path d="M270.5 558l5.5 5h-4.0V569h-3.0V563h-4.0z"/><path d="M974.5 436l5.5 5h-4.0V449h-3.0V441h-4.0z"/><path d="M980 426l5.5 5h-4.0V436h-3.0V431h-4.0z"/></g>
<g fill="#10c010" shape-rendering="auto"><path d="M734 535h11l-5.5 6z"/><path d="M744 537h2v6h4l-5 4.5l-5 -4.5h4z"/></g>
</svg>
<svg id="ui" width="1920" height="1029" viewBox="0 0 1920 1029" style="position:absolute;left:0;top:0">
<g fill="none" stroke="#c6c6c6" stroke-width="1.4" stroke-linejoin="miter">
<!-- window controls -->
<path d="M1796 14.5H1808" stroke-width="1.2"/>
<path d="M1844.5 12.5h8v8h-8zM1847.5 12.5v-3h8v8h-3" stroke-width="1.1"/>
<path d="M1892.5 9.5l11.5 11.5M1904 9.5l-11.5 11.5" stroke-width="1.2"/>
<!-- back -->
<path d="M34.8 49.5H18.6M26.9 41l-8.5 8.5l8.5 8.5" stroke-width="1.7"/>
<!-- refresh -->
<path d="M65.300 41.400A9.300 9.300 0 1 1 54.400 43.800M52.600 42.200h5.700v4.800" stroke-width="1.400"/>
<!-- list -->
<path d="M90.6 40.6h18v18.8h-18z"/>
<path d="M93 46.5h5M100 46.5h6M93 50.5h5M100 50.5h6" stroke-width="1"/>
<path d="M93 54.2h5M100 54.2h6" stroke-width="1.6"/>
<!-- line chart -->
<path d="M126.5 51.2l5.3 -6.2l5.7 4.5l7.5 -7.1M125 56.5h21.8"/>
<!-- candles -->
<path d="M164.9 44h7v11.7h-7zM168.4 40v4M168.4 55.7v4.3M175.8 46.2h7.6v5.6h-7.6zM179.6 43.2v3M179.6 51.8v3"/>
<!-- lightning + flag -->
<path d="M204 40.8h8.3l-4 6.3h2.7M205.5 49.6l-3.3 9.2M204 40.8l-4.6 8.8h6.1" stroke-width="1.3"/>
<path d="M210.3 58.8v-9.6h8.4v4.6h-8.4" stroke-width="1.3"/>
<!-- dan box -->
<path d="M237.4 40.6h20v18.8h-20z"/>
<!-- cloud -->
<path d="M278.8 55.7h-2.2a4.4 4.4 0 0 1 -0.6 -8.8a6.2 6.2 0 0 1 12 -1.4a4.6 4.6 0 0 1 3.2 10.2h-1.4" stroke-width="1.5"/>
<path d="M282.3 46.7h5.2l-2.4 3.7h3.3l-7 9.4l1.9 -7.1h-3.8z" fill="#c6c6c6" stroke="none"/>
<!-- bell -->
<path d="M314.7 56.5v-7.6a6.35 6.6 0 0 1 12.7 0v7.6M312.3 56.5h16.7M319.2 58.9h3.2M321 41.5v0.8" stroke-width="1.4"/>
<!-- <| |> -->
<path d="M726.4 44.3v14.1l-8.2 -7.05zM729.2 44.3v14.1l8.1 -7.05z" stroke-width="1.3"/>
<!-- bowtie -->
<path d="M755.9 44.3v14.1l9.4 -7.05zM773.8 44.3v14.1l-8.5 -7.05z" stroke-width="1.3"/>
<!-- left arrow -->
<path d="M794.4 51.5l7.9 -7.6v4.6h8v6.1h-8v4.6z" stroke-width="1.3"/>
<!-- right arrow -->
<path d="M847 51.5l-7.7 -7.6v4.6h-8v6.1h8v4.6z" stroke-width="1.3"/>
<!-- double up -->
<path d="M868.4 52.7l8 -8.4l8.1 8.4M870.3 58.6l6.1 -6.3l6.2 6.3" stroke-width="1.3"/>
<!-- double down -->
<path d="M907.3 44.3l6.1 6.6l6.4 -6.6M905.2 50.4l8.2 8.2l8.5 -8.2" stroke-width="1.3"/>
<!-- ruler arrows -->
<path d="M946.4 43.6h7v15.8h-7zM950 47.5h3.4M950 51.5h3.4M950 55.5h3.4M937.5 51.4h6M956.2 51.4h6" stroke-width="1.3"/>
<path d="M937 51.4l3.2 -2.4v4.8zM962.4 51.4l-3.2 -2.4v4.8z" fill="#c6c6c6" stroke="none"/>
<!-- slash, dash -->
<path d="M979 58.6l13.9 -13.5M1015 51.4h17.5" stroke-width="1.2"/>
<!-- up arrow -->
<path d="M1060.6 45.2l6.4 6.7h-3v6.7h-6.8v-6.7h-3z" stroke-width="1.3"/>
<!-- E ruler -->
<path d="M1102.8 43.9h-9.3v15.2h9.3M1093.5 47.9h5.2M1093.5 51.6h5.2M1093.5 55.4h5.2" stroke-width="1.2"/>
<!-- eraser -->
<path d="M1163.5 54.9l9.8 -9.4h5.6l-8 9.4zM1163.5 54.9v2.6h7.4v-2.6M1170.9 57.5l8 -8.5v-3.5" stroke-width="1.1"/>
<path d="M1172.5 57.6l6.4 -6v6z" fill="#9a9a9a" stroke="none"/>
</g>
<path d="M1200.3 51.3h3.3v2.6h-3.3zM1207.8 51.3h3.3v2.6h-3.3zM1215.7 51.3h3.3v2.6h-3.3z" fill="#c6c6c6"/>
<!-- dropdown chevrons -->
<g fill="none" stroke="#f0f000" stroke-width="1.500">
<path d="M216.500 102l5.200 4.800l5.800 -5.300"/>
<path d="M233.500 657.500l5.200 4.800l5.800 -5.300"/>
</g>
<path d="M309.5 79.5l5.5 5l6 -5.5" fill="none" stroke="#f0f0f0" stroke-width="1.4"/>
<!-- link icon + dot -->
<path d="M54 79.700h-8.200v5h6.500M58.500 79.700h6v5h-8M53.800 78l4.400 8.800" fill="none" stroke="#9a9a9a" stroke-width="1.300"/>
<circle cx="77.5" cy="82.5" r="2.6" fill="#e8e000"/>
<!-- right panel lines -->
<g fill="none" stroke="#cc1a10" stroke-width="1" shape-rendering="crispEdges">
<path d="M1617 109.5H1917M1617 241.5H1917M1617 371.5H1917M1617 607.5H1917M1617 736.5H1917M1917.5 109V928"/>
<path d="M1773.5 371V607" stroke-dasharray="3 2"/>
</g>
<!-- bottom small tabs -->
<g fill="none" stroke="#cc1a10" stroke-width="1">
<path d="M1626.200 928.500l9.600 17.700h46.700l7.500 -17.700"/>
<path d="M1686.700 937l4.600 9.200h47.400l3.800 -9.200"/>
<path d="M1739.200 928.500l7.500 17.700h48l7 -17.700"/>
</g>
<!-- headphone -->
<g fill="none" stroke="#f07a20" stroke-width="2.200">
<path d="M1811.500 971v-1.500a9.700 9.700 0 0 1 19.400 0v1.500"/>
<path d="M1815.200 967.300a3.400 4.600 0 0 0 0 9.200zM1827.200 967.300a3.400 4.600 0 0 1 0 9.200z" stroke-width="2"/>
</g>
<!-- + tab -->
<path d="M579.5 968h12M585.5 962v12" stroke="#c4c4c4" stroke-width="2"/>
<!-- status icons -->
<path d="M1731.500 994v16" stroke="#e01010" stroke-width="1.200"/>
<rect x="1747.500" y="993.300" width="22" height="18" fill="#0a9a22" stroke="#d8ecd8" stroke-width="1.200"/>
<rect x="1748.500" y="1006" width="20" height="4.600" fill="#18f040"/>
<path d="M1748 996.500h21M1748 999.500h21M1748 1002.500h21M1751.500 994v12M1754.500 994v12M1757.500 994v12M1760.500 994v12M1763.500 994v12M1766.500 994v12" stroke="#0c3a10" stroke-width="0.800"/>
<path d="M1777.500 1006.700h3.300v3.300h-3.300zM1783 1001.700h3.300v8.300h-3.300zM1788.300 997.200h3.400v12.800h-3.400zM1793.300 992.200h3.900v17.800h-3.900z" fill="#2eb43c"/>
<!-- yellow > marker -->
<path d="M1618.500 888l4.500 4l-4.500 4" fill="none" stroke="#f0f000" stroke-width="1.2"/>
<!-- sidebar tabs -->
<g fill="none" stroke="#5a5a5a" stroke-width="1">
<path d="M6.500 176v-80a3.500 3.500 0 0 1 3.500 -3.500h27.500V831q0 14 -12 24.500l-25.500 19M37.500 192h-14l-17 -16"/>
<path d="M23.500 391l-17 -15.500v-80a3.500 3.500 0 0 1 3.500 -3.500h12l15.500 15"/>
<path d="M23.500 491.500l-17 -15.500v-80a3.500 3.500 0 0 1 3.500 -3.500h12l15.500 15"/>
<path d="M37.500 602.500l-31 -27v-79.500a3.500 3.500 0 0 1 3.500 -3.500h12l15.500 15"/>
</g>
<path d="M37.500 826q0 16 -12 28l-25.500 20" fill="none" stroke="#8a8a8a" stroke-width="1.500"/>
<path d="M37.500 304v-112.500M6.500 276v-80.500a3.500 3.500 0 0 1 3.500 -3.500h27.500M6.500 276l31 28" fill="none" stroke="#a0a0a0" stroke-width="1"/>
</svg>

<span class="t tt" style="left:17px;top:12.8px;letter-spacing:0.55px">wh6&nbsp; -&nbsp; Ver6.8.834</span><span class="t tt" style="left:178px;top:12.8px;">文华云节点-联通2</span><span class="t tt" style="left:330px;top:12.8px;">系统K线图</span><span class="t menu" style="left:1593px;top:49px;">板块</span><span class="t menu" style="left:1638px;top:49px;">账户</span><span class="t menu" style="left:1683px;top:49px;">资讯</span><span class="t menu" style="left:1728px;top:49px;">个性化</span><span class="t menu" style="left:1789px;top:49px;">系统工具</span><span class="t menu" style="left:1865px;top:49px;">帮助</span><span class="t c tb" style="left:357.0px;top:49px;letter-spacing:0px">1</span><span class="t c tb" style="left:396.0px;top:49px;letter-spacing:0px">3</span><span class="t c tb" style="left:433.0px;top:49px;letter-spacing:0px">5</span><span class="t c tb" style="left:469.25px;top:49px;letter-spacing:-2.5px">15</span><span class="t c tb" style="left:506.4px;top:49px;letter-spacing:-0.8px">30</span><span class="t c tb" style="left:543.5px;top:49px;letter-spacing:-2px">1h</span><span class="t c tbc" style="left:580px;top:51.5px;">日</span><span class="t c tbc" style="left:616px;top:51.5px;">周</span><span class="t c tbc" style="left:654px;top:51.5px;">月</span><span class="t c tbc" style="left:691px;top:51.5px;">自</span><span class="t c " style="left:247.4px;top:50px;font-size:13px;color:#c6c6c6">单</span><span class="t c tb" style="left:1135px;top:51px;font-size:14px;letter-spacing:-0.2px">ABC</span><span class="t " style="left:88px;top:82.5px;font-size:14.5px;color:#f4f4f4">中国铝业</span><span class="t " style="left:147px;top:78px;font-size:9px;color:#ff2020;font-weight:bold">R</span><span class="t " style="left:152px;top:83.5px;font-family:'Liberation Mono','Noto Sans CJK SC',monospace;font-size:13.4px;color:#d8d8d8">（SHSE 601600）</span><span class="t " style="left:278px;top:82.5px;font-size:14.5px;color:#f4f4f4">周线</span><span class="t ind" style="left:108px;top:104px;">多空方位<span class="lt2">(0,0,0)</span></span><span class="t ind" style="left:239px;top:104px;"><span class="lt2" style="letter-spacing:-1px">VX</span><span style="margin-left:1px">量化服务商</span></span><span class="t ind" style="left:342px;top:104px;"><span class="lat">LIANGHUAFUWUSHANG</span></span><span class="t ind" style="left:512px;top:104px;"><span class="lt2" style="letter-spacing:-1px">VX</span><span style="margin-left:1px">量化服务商</span></span><span class="t ind" style="left:615px;top:104px;"><span class="lat">LIANGHUAFUWUSHANG</span></span><span class="t ind" style="left:785px;top:104px;"><span class="lt2" style="letter-spacing:-1px">VX</span><span style="margin-left:1px">量化服务商</span></span><span class="t ind" style="left:888px;top:104px;"><span class="lat">LIANGHUAFUWUSHANG</span></span><span class="t ind" style="left:1058px;top:104px;"><span class="lt2" style="letter-spacing:-1px">VX</span><span style="margin-left:1px">量化服务商</span></span><span class="t ind" style="left:1161px;top:104px;"><span class="lat">LIANGHUAFUWUSHANG</span></span><span class="t ind" style="left:1544px;top:104px;">向前复权</span><span class="t ind" style="left:108px;top:659.5px;"><span style="letter-spacing:0.25px">副图量能信号</span><span class="lt2">(0,0)</span></span><span class="t ind" style="left:256px;top:659.5px;"><span class="lt2" style="letter-spacing:-1px">VX</span><span style="margin-left:1px">量化服务商</span></span><span class="t ind" style="left:359px;top:659.5px;"><span class="lat">LIANGHUAFUWUSHANG</span></span><span class="t ind" style="left:529px;top:659.5px;"><span class="lt2" style="letter-spacing:-1px">VX</span><span style="margin-left:1px">量化服务商</span></span><span class="t ind" style="left:632px;top:659.5px;"><span class="lat">LIANGHUAFUWUSHANG</span></span><span class="t ind" style="left:802px;top:659.5px;"><span class="lt2" style="letter-spacing:-1px">VX</span><span style="margin-left:1px">量化服务商</span></span><span class="t ind" style="left:905px;top:659.5px;"><span class="lat">LIANGHUAFUWUSHANG</span></span><span class="t ind" style="left:1075px;top:659.5px;"><span class="lt2" style="letter-spacing:-1px">VX</span><span style="margin-left:1px">量化服务商</span></span><span class="t ind" style="left:1178px;top:659.5px;"><span class="lat">LIANGHUAFUWUSHANG</span></span><span class="t " style="left:102px;top:637.5px;font-size:16.5px;color:#f0e000">290周</span><span class="t r ax" style="left:100px;top:247px;">10.00</span><span class="t r ax" style="left:100px;top:494px;">5.00</span><span class="t r ax" style="left:100px;top:725px;">10.00</span><span class="t r ax" style="left:100px;top:840px;">5.00</span><span class="t c date" style="left:227px;top:941px;">2020/10</span><span class="t c date" style="left:487px;top:941px;">2021/10</span><span class="t c date" style="left:742px;top:941px;">2022/10</span><span class="t c date" style="left:992px;top:941px;">2023/10</span><span class="t c date" style="left:1247px;top:941px;">2024/10</span><span class="t c date" style="left:1507px;top:941px;">2025/10</span><span class="t c " style="left:258px;top:900px;font-family:'Noto Serif CJK SC',serif;font-weight:500;font-size:13.5px;color:#ffff00">多</span><span class="t c " style="left:328px;top:880.3px;font-family:'Noto Serif CJK SC',serif;font-weight:500;font-size:13.5px;color:#ffff00">多</span><span class="t c " style="left:338px;top:887.3px;font-family:'Noto Serif CJK SC',serif;font-weight:500;font-size:13.5px;color:#ffff00">多</span><span class="t c " style="left:378px;top:868px;font-family:'Noto Serif CJK SC',serif;font-weight:500;font-size:13.5px;color:#ffff00">多</span><span class="t c " style="left:433px;top:849.2px;font-family:'Noto Serif CJK SC',serif;font-weight:500;font-size:13.5px;color:#ffff00">多</span><span class="t c " style="left:458px;top:840.2px;font-family:'Noto Serif CJK SC',serif;font-weight:500;font-size:13.5px;color:#ffff00">多</span><span class="t c " style="left:813px;top:864px;font-family:'Noto Serif CJK SC',serif;font-weight:500;font-size:13.5px;color:#ffff00">多</span><span class="t c " style="left:868px;top:844px;font-family:'Noto Serif CJK SC',serif;font-weight:500;font-size:13.5px;color:#ffff00">多</span><span class="t c " style="left:973px;top:828px;font-family:'Noto Serif CJK SC',serif;font-weight:500;font-size:13.5px;color:#ffff00">多</span><span class="t c " style="left:1107px;top:816px;font-family:'Noto Serif CJK SC',serif;font-weight:500;font-size:13.5px;color:#ffff00">多</span><span class="t c " style="left:1243px;top:779px;font-family:'Noto Serif CJK SC',serif;font-weight:500;font-size:13.5px;color:#ffff00">多</span><span class="t c " style="left:1508px;top:774px;font-family:'Noto Serif CJK SC',serif;font-weight:500;font-size:13.5px;color:#ffff00">多</span><span class="t c " style="left:1518px;top:774px;font-family:'Noto Serif CJK SC',serif;font-weight:500;font-size:13.5px;color:#ffff00">多</span><span class="t c " style="left:633.7px;top:874.7px;font-family:'Noto Serif CJK SC',serif;font-weight:500;font-size:13.5px;color:#00ff00">空</span><span class="t c " style="left:1378.5px;top:833.5px;font-family:'Noto Serif CJK SC',serif;font-weight:500;font-size:13.5px;color:#00ff00">空</span><span class="t c " style="left:1393.5px;top:823.5px;font-family:'Noto Serif CJK SC',serif;font-weight:500;font-size:13.5px;color:#00ff00">空</span><span class="t " style="left:1619.5px;top:84px;font-size:16.5px;color:#ff3030;font-weight:bold">R</span><span class="t y" style="left:1634px;top:92px;font-size:26px">中国铝业</span><span class="t y" style="left:1753px;top:92px;font-size:27px">601600</span><span class="t lab" style="left:1619px;top:123.5px;">卖五</span><span class="t r num red" style="left:1763px;top:123.5px;">11.07</span><span class="t r num" style="left:1910px;top:123.5px;color:#f0f000">3997</span><span class="t lab" style="left:1619px;top:149.5px;">卖四</span><span class="t r num red" style="left:1763px;top:149.5px;">11.06</span><span class="t r num" style="left:1910px;top:149.5px;color:#f0f000">1687</span><span class="t lab" style="left:1619px;top:175.5px;">卖三</span><span class="t r num red" style="left:1763px;top:175.5px;">11.05</span><span class="t r num" style="left:1910px;top:175.5px;color:#f0f000">7592</span><span class="t lab" style="left:1619px;top:201.5px;">卖二</span><span class="t r num red" style="left:1763px;top:201.5px;">11.04</span><span class="t r num" style="left:1910px;top:201.5px;color:#f0f000">861</span><span class="t lab" style="left:1619px;top:227.5px;">卖一</span><span class="t r num red" style="left:1763px;top:227.5px;">11.03</span><span class="t r num" style="left:1910px;top:227.5px;color:#f0f000">7397</span><span class="t lab" style="left:1619px;top:253.5px;">买一</span><span class="t r num red" style="left:1763px;top:253.5px;">11.02</span><span class="t r num" style="left:1910px;top:253.5px;color:#f0f000">2929</span><span class="t lab" style="left:1619px;top:279.5px;">买二</span><span class="t r num red" style="left:1763px;top:279.5px;">11.01</span><span class="t r num" style="left:1910px;top:279.5px;color:#f0f000">1862</span><span class="t lab" style="left:1619px;top:305.5px;">买三</span><span class="t r num red" style="left:1763px;top:305.5px;">11.00</span><span class="t r num" style="left:1910px;top:305.5px;color:#f0f000">12464</span><span class="t lab" style="left:1619px;top:331.5px;">买四</span><span class="t r num red" style="left:1763px;top:331.5px;">10.99</span><span class="t r num" style="left:1910px;top:331.5px;color:#f0f000">2369</span><span class="t lab" style="left:1619px;top:357.5px;">买五</span><span class="t r num red" style="left:1763px;top:357.5px;">10.98</span><span class="t r num" style="left:1910px;top:357.5px;color:#f0f000">1832</span><span class="t lab" style="left:1619px;top:385.5px;">最新</span><span class="t r b red" style="left:1763px;top:386.5px;">11.03</span><span class="t lab" style="left:1780px;top:385.5px;">开盘</span><span class="t r b grn" style="left:1910px;top:386.5px;">10.55</span><span class="t lab" style="left:1619px;top:411.5px;">涨跌</span><span class="t r b red" style="left:1763px;top:412.5px;">0.45</span><span class="t lab" style="left:1780px;top:411.5px;">最高</span><span class="t r b red" style="left:1910px;top:412.5px;">11.27</span><span class="t lab" style="left:1619px;top:437.5px;">涨幅</span><span class="t r b red" style="left:1763px;top:438.5px;">4.25%</span><span class="t lab" style="left:1780px;top:437.5px;">最低</span><span class="t r b grn" style="left:1910px;top:438.5px;">10.55</span><span class="t lab" style="left:1619px;top:463.5px;">振幅</span><span class="t r b y" style="left:1763px;top:464.5px;">6.81%</span><span class="t lab" style="left:1780px;top:463.5px;">均价</span><span class="t r b red" style="left:1910px;top:464.5px;">10.96</span><span class="t lab" style="left:1619px;top:489.5px;">委比</span><span class="t r b y" style="left:1763px;top:490.5px;">-0.18%</span><span class="t lab" style="left:1780px;top:489.5px;">量比</span><span class="t r b y" style="left:1910px;top:490.5px;">1.74</span><span class="t lab" style="left:1619px;top:515.5px;">总量</span><span class="t r b y" style="left:1763px;top:516.5px;">402万</span><span class="t lab" style="left:1780px;top:515.5px;">换手率</span><span class="t r b y" style="left:1910px;top:516.5px;">3.05%</span><span class="t lab" style="left:1619px;top:541.5px;">金额</span><span class="t r b red" style="left:1763px;top:542.5px;">44.0亿</span><span class="t lab" style="left:1780px;top:541.5px;">市盈率</span><span class="t r b y" style="left:1910px;top:542.5px;">15.26</span><span class="t lab" style="left:1619px;top:567.5px;">外盘</span><span class="t r b red" style="left:1763px;top:568.5px;">233万</span><span class="t lab" style="left:1780px;top:567.5px;">涨停</span><span class="t r b red" style="left:1910px;top:568.5px;">11.64</span><span class="t lab" style="left:1619px;top:593.5px;">内盘</span><span class="t r b grn" style="left:1763px;top:594.5px;">169万</span><span class="t lab" style="left:1780px;top:593.5px;">跌停</span><span class="t r b grn" style="left:1910px;top:594.5px;">9.52</span><span class="t hd" style="left:1623px;top:624px;">时间</span><span class="t hd" style="left:1749px;top:624px;">价位</span><span class="t hd" style="left:1871px;top:624px;">大单</span><span class="t hd" style="left:1623px;top:753px;">时间</span><span class="t hd" style="left:1748px;top:753px;">价位</span><span class="t hd" style="left:1871px;top:753px;">现手</span><span class="t b" style="left:1623px;top:781px;color:#a2a2a2">14:56</span><span class="t r b red" style="left:1782.5px;top:781px;">11.08</span><span class="t r b red" style="left:1905px;top:781px;">611</span><span class="t b" style="left:1623px;top:809px;color:#a2a2a2">14:56</span><span class="t r b red" style="left:1782.5px;top:809px;">11.07</span><span class="t r b grn" style="left:1905px;top:809px;">312</span><span class="t b" style="left:1623px;top:837px;color:#a2a2a2">14:56</span><span class="t r b red" style="left:1782.5px;top:837px;">11.08</span><span class="t r b red" style="left:1905px;top:837px;">931</span><span class="t b" style="left:1623px;top:865px;color:#a2a2a2">14:57</span><span class="t r b red" style="left:1782.5px;top:865px;">11.08</span><span class="t r b red" style="left:1905px;top:865px;">592</span><span class="t b" style="left:1623px;top:893px;color:#a2a2a2">14:59</span><span class="t r b red" style="left:1782.5px;top:893px;">11.03</span><span class="t r b grn" style="left:1905px;top:893px;">46355</span><span class="t " style="left:1643.7px;top:937.5px;font-size:14.5px;color:#b8b8b8">明细</span><span class="t " style="left:1699.7px;top:937.5px;font-size:14.5px;color:#a0a0a0">分价</span><span class="t " style="left:1755.6px;top:937.5px;font-size:14.5px;color:#a0a0a0">筹码</span><span class="t " style="left:43px;top:967px;font-size:15px;color:#c4c4c4">小编导读</span><span class="t " style="left:116.7px;top:967px;font-size:15px;color:#f07a20">我的合约</span><span class="t " style="left:190.7px;top:967px;font-size:15px;color:#c4c4c4">主力合约排名</span><span class="t " style="left:294.6px;top:967px;font-size:15px;color:#c4c4c4">品种加权排名</span><span class="t " style="left:398.5px;top:967px;font-size:15px;color:#c4c4c4">商品分类指数</span><span class="t " style="left:503px;top:967px;font-size:15px;color:#c4c4c4">国内股票</span><span class="t " style="left:1840px;top:970px;font-size:16px;color:#f07a20">在线客服</span><span class="t " style="left:35.5px;top:1002px;font-family:'Liberation Mono','Noto Sans CJK SC',monospace;font-weight:bold;font-size:14.5px;color:#36b24a;"><span style="letter-spacing:1.8px;font-weight:normal">上证指数</span> 3878.00 -19.71&nbsp;<span style="letter-spacing:1.8px;font-weight:normal"> 文华商品</span> 161.75 -0.12</span><span class="t c " style="left:1613px;top:1003px;font-size:14.5px;color:#e0e0e0">期货户</span><span class="t c " style="left:1684px;top:1003px;font-size:14.5px;color:#e0e0e0">外盘户</span><span class="t " style="left:1806px;top:1002.5px;font-size:15px;color:#c8c8c8">17:16:34 - wh</span><span class="abs side" style="left:12px;top:141px;transform:translateY(-50%);color:#8a8a8a">分时图</span><span class="abs side" style="left:12px;top:241px;transform:translateY(-50%);color:#e8e8e8">K线图</span><span class="abs side" style="left:12px;top:341px;transform:translateY(-50%);color:#8a8a8a">资讯链</span><span class="abs side" style="left:12px;top:541px;transform:translateY(-50%);color:#8a8a8a">下单</span><span class="abs side" style="left:12px;top:441px;transform:translateY(-50%);writing-mode:vertical-rl;width:20px;height:80px;line-height:20px;letter-spacing:1.8px;white-space:nowrap;text-align:center">F10资料</span>
</body></html>
